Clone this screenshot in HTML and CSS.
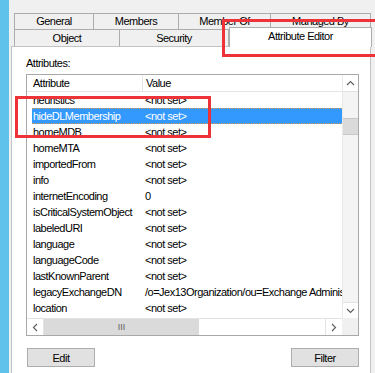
FILE: index.html
```html
<!DOCTYPE html>
<html lang="en">

<head>
  <meta charset="UTF-8">
  <title>Distribution Group Properties - Attribute Editor</title>
  <meta name="viewport" content="width=device-width, initial-scale=1">
  <link rel="stylesheet" href="styles.css">
</head>

<body>
  <div class="window">
    <div class="edge"></div>
    <div class="dialog">
      <div class="tab-row row-back">
        <div class="tab w-general">General</div>
        <div class="tab w-members">Members</div>
        <div class="tab w-memberof">Member Of</div>
        <div class="tab w-managed">Managed By</div>
      </div>
      <div class="tab-row row-front">
        <div class="tab w-object">Object</div>
        <div class="tab w-security">Security</div>
        <div class="tab tab-active">Attribute Editor</div>
      </div>

      <div class="panel">
        <div class="label">Attributes:</div>
        <div class="listbox">
          <div class="list-main">
            <div class="list-head">
              <div class="head-attr">Attribute</div>
              <div class="head-val">Value</div>
            </div>
            <div class="list-rows" id="rows">
              <!-- rows rendered below -->
            </div>
          </div>
          <div class="vscroll">
            <div class="sb-btn sb-up">
              <svg width="9" height="6" viewBox="0 0 9 6"><polyline points="1,5 4.5,1.5 8,5" fill="none" stroke="#606060" stroke-width="1.2"/></svg>
            </div>
            <div class="vtrack"><div class="vthumb"></div></div>
            <div class="sb-btn sb-down">
              <svg width="9" height="6" viewBox="0 0 9 6"><polyline points="1,1 4.5,4.5 8,1" fill="none" stroke="#606060" stroke-width="1.2"/></svg>
            </div>
          </div>
          <div class="hscroll">
            <div class="sb-btn sb-left">
              <svg width="6" height="9" viewBox="0 0 6 9"><polyline points="5,1 1.5,4.5 5,8" fill="none" stroke="#606060" stroke-width="1.2"/></svg>
            </div>
            <div class="hthumb">III</div>
            <div class="htrack"></div>
            <div class="sb-btn sb-right">
              <svg width="6" height="9" viewBox="0 0 6 9"><polyline points="1,1 4.5,4.5 1,8" fill="none" stroke="#606060" stroke-width="1.2"/></svg>
            </div>
          </div>
          <div class="corner"></div>
        </div>
        <div class="buttons">
          <button class="btn">Edit</button>
          <button class="btn">Filter</button>
        </div>
      </div>
    </div>
  </div>

  <!-- red annotation boxes -->
  <div class="mark mark-tab"></div>
  <div class="mark mark-row"></div>

  <script>
    const attrs = [
      ['heuristics', '<not set>'],
      ['hideDLMembership', '<not set>', true],
      ['homeMDB', '<not set>'],
      ['homeMTA', '<not set>'],
      ['importedFrom', '<not set>'],
      ['info', '<not set>'],
      ['internetEncoding', '0'],
      ['isCriticalSystemObject', '<not set>'],
      ['labeledURI', '<not set>'],
      ['language', '<not set>'],
      ['languageCode', '<not set>'],
      ['lastKnownParent', '<not set>'],
      ['legacyExchangeDN', '/o=Jex13Organization/ou=Exchange Administrative Group (FYDIBOHF23SPDLT)'],
      ['location', '<not set>']
    ];

    const rows = document.getElementById('rows');
    attrs.forEach(a => {
      const row = document.createElement('div');
      row.className = a[2] ? 'row selected' : 'row';
      const name = document.createElement('div');
      name.className = 'cell-attr';
      name.textContent = a[0];
      const val = document.createElement('div');
      val.className = 'cell-val';
      val.textContent = a[1];
      row.appendChild(name);
      row.appendChild(val);
      rows.appendChild(row);
    });
  </script>
</body>

</html>
```

FILE: styles.css
```css
body {
  margin: 0;
  font-family: "Liberation Sans", Arial, sans-serif;
  font-size: 11px;
  letter-spacing: -0.5px;
  color: #000;
  background: #f0f0f0;
  overflow: hidden;
}

.window {
  display: flex;
  height: 373px;
  overflow: hidden;
}

.edge {
  width: 9px;
  flex: none;
  background: #5ec2ea;
}

.dialog {
  flex: 1;
  background: #f0f0f0;
  padding: 13px 0 0 2px;
}

/* tabs */
.tab-row {
  display: flex;
  margin-left: 3px;
}

.row-back {
  height: 16px;
}

.row-front {
  height: 17px;
}

.tab {
  box-sizing: border-box;
  border: 1px solid #acacac;
  border-bottom: none;
  margin-right: -1px;
  background: #f0f0f0;
  text-align: center;
  line-height: 15px;
}

.row-front .tab {
  line-height: 17px;
}

.w-general { width: 80px; }
.w-members { width: 86px; }
.w-memberof { width: 93px; }
.w-managed { width: 101px; }
.w-object { width: 106px; }
.w-security { width: 110px; }

.tab-active {
  position: relative;
  z-index: 1;
  width: 143px;
  height: 20px;
  margin-top: -2px;
  margin-left: 1px;
  background: #fff;
  line-height: 16px;
}

/* panel */
.panel {
  box-sizing: border-box;
  width: 360px;
  height: 340px;
  background: #fff;
  border: 1px solid #c3c3c3;
  padding: 9px 0 0 14px;
}

.label {
  line-height: 14px;
}

.listbox {
  box-sizing: border-box;
  width: 333px;
  height: 262px;
  margin-top: 4px;
  border: 1px solid #a9a9a9;
  display: grid;
  grid-template-columns: 1fr 16px;
  grid-template-rows: 1fr 17px;
}

.list-main {
  overflow: hidden;
  white-space: nowrap;
}

.list-head {
  display: flex;
  height: 17px;
  box-sizing: border-box;
  border-bottom: 1px solid #e5e5e5;
  line-height: 16px;
}

.head-attr {
  box-sizing: border-box;
  width: 116px;
  padding-left: 6px;
  border-right: 1px solid #e5e5e5;
}

.head-val {
  padding-left: 3px;
}

.row {
  display: flex;
  height: 16px;
  line-height: 16px;
  margin-left: 5px;
}

.cell-attr {
  width: 110px;
  flex: none;
  padding-left: 1px;
  box-sizing: border-box;
}

.cell-val {
  padding-left: 3px;
}

.row.selected {
  background: #3399ff;
  color: #fff;
  box-sizing: border-box;
  border-top: 1px dotted #d99a55;
  border-bottom: 1px dotted #d99a55;
  line-height: 14px;
}

/* scrollbars */
.vscroll {
  display: flex;
  flex-direction: column;
  background: #f4f4f4;
  border-left: 1px solid #e8e8e8;
}

.sb-btn {
  display: flex;
  align-items: center;
  justify-content: center;
  background: #fff;
  flex: none;
}

.sb-up {
  height: 17px;
  border-bottom: 1px solid #e3e3e3;
  box-sizing: border-box;
}

.sb-down {
  height: 16px;
  border-top: 1px solid #e3e3e3;
  box-sizing: border-box;
}

.vtrack {
  flex: 1;
}

.vthumb {
  margin: 26px 0 0 0;
  height: 15px;
  background: #dadada;
  border-top: 1px solid #c8c8c8;
  border-bottom: 1px solid #c8c8c8;
}

.hscroll {
  display: flex;
  background: #f4f4f4;
  border-top: 1px solid #e3e3e3;
  box-sizing: border-box;
}

.sb-left {
  width: 16px;
  border-right: 1px solid #e3e3e3;
}

.sb-right {
  width: 17px;
  border-left: 1px solid #e3e3e3;
  box-sizing: border-box;
}

.hthumb {
  width: 155px;
  background: #dadada;
  text-align: center;
  font-size: 9px;
  letter-spacing: 0;
  line-height: 16px;
  color: #606060;
}

.htrack {
  flex: 1;
  background: #fff;
}

.corner {
  background: #f0f0f0;
}

/* buttons */
.buttons {
  box-sizing: border-box;
  width: 333px;
  padding-left: 1px;
  margin-top: 12px;
  display: flex;
  justify-content: space-between;
}

.btn {
  width: 68px;
  height: 19px;
  padding: 0;
  background: #e1e1e1;
  border: 1px solid #adadad;
  font: inherit;
  letter-spacing: -0.5px;
  color: #000;
}

/* red annotations */
.mark {
  position: absolute;
  box-sizing: border-box;
  border: 3px solid #ee3338;
}

.mark-tab {
  left: 222px;
  top: 19px;
  width: 170px;
  height: 38px;
}

.mark-row {
  left: 15px;
  top: 96px;
  width: 196px;
  height: 42px;
}
```
